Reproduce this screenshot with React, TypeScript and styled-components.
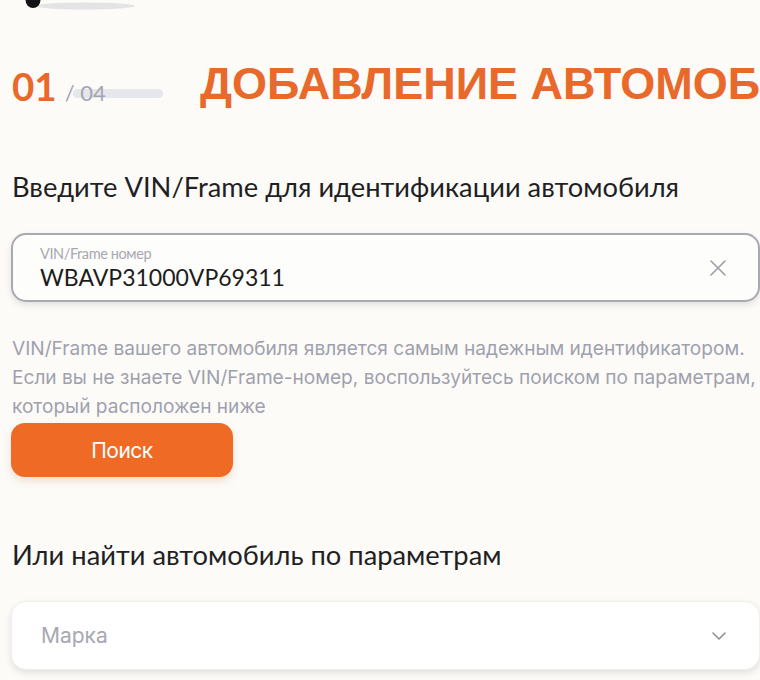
import React from 'react';
import styled, { createGlobalStyle } from 'styled-components';

const GlobalStyle = createGlobalStyle`
  html, body {
    margin: 0;
    padding: 0;
    background: #fcfbf8;
    overflow: hidden;
  }
  body {
    font-family: Lato, 'Noto Sans', sans-serif;
  }
`;

const Page = styled.div`
  width: 760px;
  height: 680px;
  overflow: hidden;
  background: #fcfbf8;
  box-sizing: border-box;
  padding: 0 0 0 11px;
`;

const TopDecor = styled.svg`
  display: block;
  margin-left: 14px;
`;

const StepRow = styled.div`
  display: flex;
  align-items: center;
  height: 50px;
  margin-top: 49px;
  white-space: nowrap;
`;

const StepCounter = styled.div`
  display: flex;
  align-items: baseline;
  width: 189px;
  flex-shrink: 0;
`;

const StepCurrent = styled.span`
  font-family: Lato, sans-serif;
  font-weight: 700;
  font-size: 38.5px;
  color: #e8692a;
  margin-left: 1px;
`;

const StepTotal = styled.span`
  position: relative;
  font-family: Lato, sans-serif;
  font-size: 22px;
  color: #a3a6b0;
  margin-left: 8px;
`;

const ProgressTrack = styled.span`
  position: absolute;
  left: 8px;
  top: 10px;
  width: 90px;
  height: 9px;
  border-radius: 5px;
  background: #e6e7ea;
  z-index: 0;
`;

const StepText = styled.span`
  position: relative;
  z-index: 1;
`;

const Title = styled.h1`
  margin: 0 0 4px;
  font-family: 'Liberation Sans', Arial, sans-serif;
  font-weight: 700;
  font-size: 45px;
  color: #e8692a;
`;

const SectionTitle = styled.h2<{ $top: number }>`
  margin: ${(p) => p.$top}px 0 0 1px;
  font-family: Lato, sans-serif;
  font-weight: 400;
  font-size: 27.3px;
  line-height: 32px;
  color: #1f1f24;
`;

const Field = styled.div<{ $outlined?: boolean }>`
  display: flex;
  align-items: center;
  box-sizing: border-box;
  width: 749px;
  height: 69px;
  margin-top: 30px;
  padding: 0 28px 0 27px;
  border-radius: 15px;
  background: ${(p) => (p.$outlined ? '#fdfdfb' : '#ffffff')};
  border: ${(p) => (p.$outlined ? '2px solid #a9a9b1' : '1px solid #f0efec')};
  box-shadow: 0 3px 6px rgba(40, 40, 60, 0.12);
`;

const FieldBody = styled.div`
  flex: 1;
  display: flex;
  flex-direction: column;
  margin-top: 2px;
`;

const FieldLabel = styled.span`
  font-family: Lato, sans-serif;
  font-size: 14.5px;
  color: #a7a8b0;
  line-height: 16px;
  letter-spacing: -0.4px;
`;

const FieldValue = styled.span`
  font-family: Lato, sans-serif;
  font-size: 23px;
  color: #1c1c20;
  line-height: 30px;
`;

const Placeholder = styled.span`
  flex: 1;
  font-family: Inter, sans-serif;
  font-size: 21px;
  color: #a7a8b0;
  margin-left: 2px;
`;

const IconButton = styled.span`
  display: flex;
  width: 24px;
  height: 24px;
  align-items: center;
  justify-content: center;
`;

const Hint = styled.p`
  margin: 32px 0 0 1px;
  font-family: Inter, sans-serif;
  font-size: 19.1px;
  line-height: 29px;
  color: #9fa1ae;
  white-space: nowrap;
`;

const PrimaryButton = styled.button`
  display: block;
  width: 222px;
  height: 54px;
  margin-top: 2px;
  border: none;
  border-radius: 14px;
  background: #ee6a25;
  color: #fff;
  font-family: Inter, sans-serif;
  font-size: 21px;
  letter-spacing: -0.5px;
  box-shadow: 0 4px 8px rgba(200, 90, 30, 0.18);
  cursor: pointer;
`;

export default function App() {
  return (
    <>
      <GlobalStyle />
      <Page>
        <TopDecor width="120" height="12" viewBox="0 0 120 12">
          <ellipse cx="60" cy="6" rx="50" ry="3.5" fill="#e4e4e6" />
          <ellipse cx="8" cy="0" rx="7.5" ry="8" fill="#141416" />
        </TopDecor>

        <StepRow>
          <StepCounter>
            <StepCurrent>01</StepCurrent>
            <StepTotal>
              /
              <ProgressTrack />
              <StepText> 04</StepText>
            </StepTotal>
          </StepCounter>
          <Title>ДОБАВЛЕНИЕ АВТОМОБИЛЯ</Title>
        </StepRow>

        <SectionTitle $top={60}>Введите VIN/Frame для идентификации автомобиля</SectionTitle>

        <Field $outlined>
          <FieldBody>
            <FieldLabel>VIN/Frame номер</FieldLabel>
            <FieldValue>WBAVP31000VP69311</FieldValue>
          </FieldBody>
          <IconButton>
            <svg width="18" height="18" viewBox="0 0 18 18" fill="none" stroke="#9d9ea6" strokeWidth="1.6" strokeLinecap="round">
              <path d="M2 2l14 14M16 2L2 16" />
            </svg>
          </IconButton>
        </Field>

        <Hint>
          VIN/Frame вашего автомобиля является самым надежным идентификатором.
          <br />
          Если вы не знаете VIN/Frame-номер, воспользуйтесь поиском по параметрам,
          <br />
          который расположен ниже
        </Hint>

        <PrimaryButton>Поиск</PrimaryButton>

        <SectionTitle $top={62}>Или найти автомобиль по параметрам</SectionTitle>

        <Field>
          <Placeholder>Марка</Placeholder>
          <IconButton>
            <svg width="16" height="10" viewBox="0 0 16 10" fill="none" stroke="#8e8f98" strokeWidth="1.6" strokeLinecap="round" strokeLinejoin="round">
              <path d="M2 2l6 6 6-6" />
            </svg>
          </IconButton>
        </Field>
      </Page>
    </>
  );
}
